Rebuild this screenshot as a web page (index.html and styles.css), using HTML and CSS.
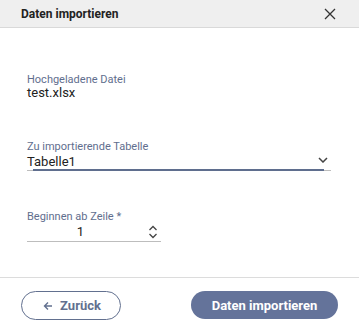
FILE: index.html
```html
<!DOCTYPE html>
<html lang="de">
<head>
    <meta charset="UTF-8">
    <meta name="viewport" content="width=device-width, initial-scale=1.0">
    <title>Daten importieren</title>
    <link rel="stylesheet" href="styles.css">
</head>
<body>
    <div class="dialog">
        <div class="dialog-header">
            <span class="dialog-title">Daten importieren</span>
            <svg class="close-icon" width="12" height="12" viewBox="0 0 12 12">
                <path d="M1 1 L11 11 M11 1 L1 11" stroke="#333" stroke-width="1.3" fill="none"/>
            </svg>
        </div>

        <div class="dialog-content">
            <div class="field field-file">
                <div class="field-label">Hochgeladene Datei</div>
                <div class="field-value">test.xlsx</div>
            </div>

            <div class="field field-select">
                <div class="field-label">Zu importierende Tabelle</div>
                <div class="select">
                    <span class="field-value">Tabelle1</span>
                    <svg class="chevron" width="10" height="6" viewBox="0 0 10 6">
                        <path d="M1 1 L5 5 L9 1" stroke="#444" stroke-width="1.5" fill="none"/>
                    </svg>
                </div>
            </div>

            <div class="field field-number">
                <div class="field-label">Beginnen ab Zeile *</div>
                <div class="number">
                    <span class="field-value number-value">1</span>
                    <svg class="spin" width="10" height="14" viewBox="0 0 10 14">
                        <path d="M1.5 5 L5 1.5 L8.5 5 M1.5 9 L5 12.5 L8.5 9" stroke="#444" stroke-width="1.3" fill="none"/>
                    </svg>
                </div>
            </div>
        </div>

        <div class="dialog-footer">
            <button class="btn btn-outline">
                <svg width="10" height="10" viewBox="0 0 10 10">
                    <path d="M9 5 H1.5 M5 1.5 L1.5 5 L5 8.5" stroke="#62708f" stroke-width="1.4" fill="none"/>
                </svg>
                Zurück
            </button>
            <button class="btn btn-primary">Daten importieren</button>
        </div>
    </div>
</body>
</html>
```

FILE: styles.css
```css
body {
    margin: 0;
    font-family: Roboto, "Liberation Sans", sans-serif;
    background: #fff;
    color: #222;
}
.dialog {
    width: 359px;
    height: 336px;
}
.dialog-header {
    height: 27px;
    background: #efefef;
    border-bottom: 1px solid #d9d9d9;
    display: flex;
    align-items: center;
    justify-content: space-between;
    padding: 0 23px 0 21px;
}
.dialog-title {
    font-size: 12px;
    font-weight: 700;
    color: #222;
}
.close-icon {
    display: block;
}
.dialog-content {
    height: 250px;
    box-sizing: border-box;
    padding: 46px 28px 0 27px;
    border-bottom: 1px solid #dcdcdc;
}
.field-label {
    font-size: 11px;
    line-height: 12px;
    color: #5f6e8e;
}
.field-value {
    font-size: 13px;
    line-height: 14px;
    color: #222;
}
.field-select {
    margin-top: 41px;
}
.select {
    position: relative;
    display: flex;
    align-items: center;
    justify-content: space-between;
    padding: 2px 3px 1px 0;
    border-bottom: 1px solid #bdbdbd;
}
.select::after {
    content: "";
    position: absolute;
    left: 6px;
    right: 7px;
    bottom: -1px;
    height: 2px;
    background: #5f6e8e;
}
.chevron {
    display: block;
    margin-top: -4px;
}
.field-number {
    margin-top: 40px;
    width: 134px;
}
.number {
    display: flex;
    align-items: center;
    padding: 2px 3px 2px 0;
    border-bottom: 1px solid #bdbdbd;
}
.number-value {
    flex: 1;
    text-align: center;
    padding-right: 14px;
}
.spin {
    display: block;
}
.dialog-footer {
    display: flex;
    justify-content: space-between;
    padding: 13px 21px 0 21px;
}
.btn {
    height: 29px;
    border-radius: 15px;
    font-family: Roboto, "Liberation Sans", sans-serif;
    font-size: 13px;
    font-weight: 700;
    display: flex;
    align-items: center;
    justify-content: center;
    gap: 7px;
    cursor: pointer;
}
.btn-outline {
    width: 100px;
    background: #fff;
    border: 1px solid #62708f;
    color: #62708f;
    padding: 0 0 0 2px;
}
.btn-primary {
    width: 147px;
    height: 28px;
    background: #64739a;
    border: none;
    color: #fff;
}
```
